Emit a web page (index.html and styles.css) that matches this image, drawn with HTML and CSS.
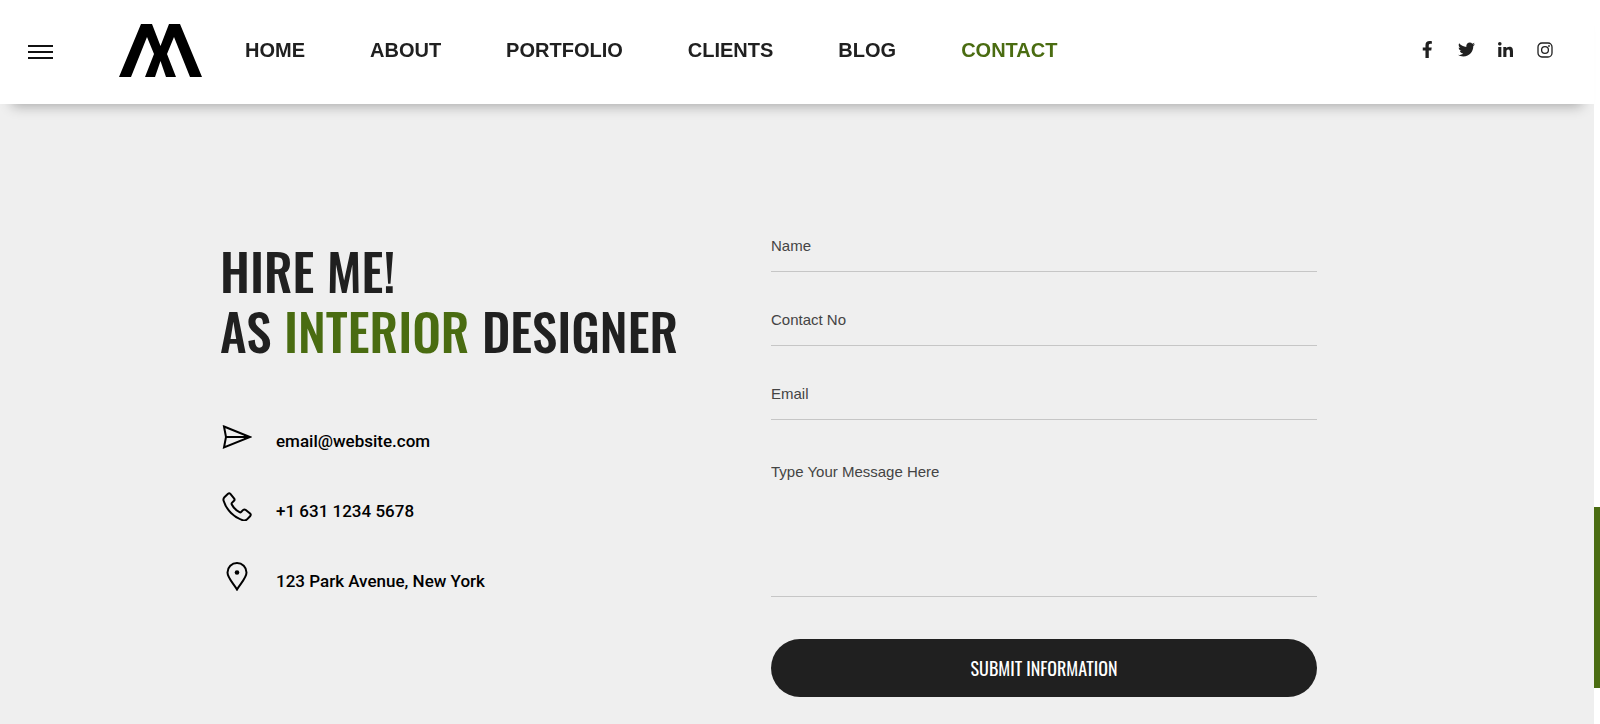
FILE: index.html
```
<!DOCTYPE html>
<html lang="en">
<head>
    <meta charset="utf-8">
    <meta name="viewport" content="width=device-width, initial-scale=1">
    <title>Contact - Interior Designer</title>
    <link rel="stylesheet" href="styles.css">
</head>
<body>
    <header class="header">
        <button class="menu-btn" type="button" aria-label="Open menu">
            <span></span>
            <span></span>
            <span></span>
        </button>
        <a class="logo" href="#" aria-label="Home page">
            <svg viewBox="0 0 83 53" width="83" height="53">
                <path d="M0 53 22 0H33L41.500 22 50 0H61L83 53H71L55 13 48 30 57 53H47L41.500 37 36 53H26L35 30 28 13 12 53Z"/>
            </svg>
        </a>
        <nav class="nav">
            <a href="#">HOME</a>
            <a href="#">ABOUT</a>
            <a href="#">PORTFOLIO</a>
            <a href="#">CLIENTS</a>
            <a href="#">BLOG</a>
            <a class="active" href="#">CONTACT</a>
        </nav>
        <div class="social">
            <a href="#" aria-label="Facebook">
                <svg viewBox="0 0 320 512" height="17"><path d="M279.140 288l14.220-92.660h-88.910v-60.130c0-25.350 12.420-50.060 52.240-50.060h40.420V6.260S260.430 0 225.360 0c-73.220 0-121.080 44.380-121.080 124.720v70.620H22.890V288h81.390v224h100.170V288z"/></svg>
            </a>
            <a href="#" aria-label="Twitter">
                <svg viewBox="0 0 512 512" height="17"><path d="M459.370 151.716c.325 4.548.325 9.097.325 13.645 0 138.720-105.583 298.558-298.558 298.558-59.452 0-114.680-17.219-161.137-47.106 8.447.974 16.568 1.299 25.340 1.299 49.055 0 94.213-16.568 130.274-44.832-46.132-.975-84.792-31.188-98.112-72.772 6.498.974 12.995 1.624 19.818 1.624 9.421 0 18.843-1.300 27.614-3.573-48.081-9.747-84.143-51.980-84.143-102.985v-1.299c13.969 7.797 30.214 12.670 47.431 13.319-28.264-18.843-46.781-51.005-46.781-87.391 0-19.492 5.197-37.360 14.294-52.954 51.655 63.675 129.300 105.258 216.365 109.807-1.624-7.797-2.599-15.918-2.599-24.040 0-57.828 46.782-104.934 104.934-104.934 30.213 0 57.502 12.670 76.670 33.137 23.715-4.548 46.456-13.320 66.599-25.340-7.798 24.366-24.366 44.833-46.132 57.827 21.117-2.273 41.584-8.122 60.426-16.243-14.292 20.791-32.161 39.308-52.628 54.253z"/></svg>
            </a>
            <a href="#" aria-label="LinkedIn">
                <svg viewBox="0 0 448 448" height="15"><path d="M100.280 448H7.400V148.900h92.880zM53.790 108.100C24.090 108.100 0 83.500 0 53.800a53.790 53.790 0 0 1 107.580 0c0 29.700-24.100 54.300-53.790 54.300zM447.900 448h-92.680V302.400c0-34.700-.7-79.200-48.290-79.200-48.290 0-55.690 37.700-55.690 76.700V448h-92.780V148.900h89.080v40.800h1.300c12.400-23.500 42.690-48.300 87.880-48.300 94 0 111.280 61.900 111.280 142.300V448z"/></svg>
            </a>
            <a href="#" aria-label="Instagram">
                <svg class="line" viewBox="0 0 16 16" height="16"><rect x="1" y="1" width="14" height="14" rx="4"/><circle cx="8" cy="8" r="3.400"/><circle cx="12" cy="4" r=".3"/></svg>
            </a>
        </div>
    </header>

    <main class="contact">
        <section class="info">
            <h1>HIRE ME!<br>AS <span>INTERIOR</span> DESIGNER</h1>
            <ul>
                <li>
                    <svg viewBox="0 0 30 30" width="30" height="30"><path d="M2 5.500 28 16 2 26.500 4 16ZM4 16H28"/><path class="dot" d="M22 13.500 29 16 22 18.500Z"/></svg>
                    <a href="mailto:email@website.com">email@website.com</a>
                </li>
                <li>
                    <svg viewBox="0 -1 30 30" width="30" height="30"><path d="M6 1.700Q7.300.7 8.400 1.900L12.200 6.600Q13 7.800 12 8.800L9.900 10.900Q9.300 11.600 9.800 12.500C11.500 15.800 14.200 18.500 17.500 20.200Q18.400 20.700 19.100 20L21.200 17.900Q22.300 17 23.500 17.800L28.100 21.600Q29.300 22.700 28.300 24L24.800 27.600Q23.300 29 21.300 28.400C12 25.500 4.500 18 1.600 8.700Q1 6.700 2.400 5.200Z"/></svg>
                    <a href="tel:+163112345678">+1 631 1234 5678</a>
                </li>
                <li>
                    <svg viewBox="0 -1 30 30" width="30" height="30"><path d="M15 27.500C12 22 5.500 16 5.500 10.500A9.500 9.500 0 0 1 24.500 10.500C24.500 16 18 22 15 27.500Z"/><circle class="dot" cx="15" cy="10.500" r="2.300"/></svg>
                    <span>123 Park Avenue, New York</span>
                </li>
            </ul>
        </section>

        <form class="contact-form">
            <input type="text" name="name" placeholder="Name" aria-label="Name">
            <input type="tel" name="phone" placeholder="Contact No" aria-label="Contact No">
            <input type="email" name="email" placeholder="Email" aria-label="Email">
            <textarea name="message" placeholder="Type Your Message Here" aria-label="Type Your Message Here"></textarea>
            <button type="submit">SUBMIT INFORMATION</button>
        </form>
    </main>

    <div class="scroll-track"><div class="scroll-thumb"></div></div>
</body>
</html>
```
FILE: styles.css
```
* { box-sizing: border-box; }
body { margin: 0; padding-right: 6px; min-height: 100vh; display: flex; flex-direction: column; background: white; color: #202020; font-family: "Liberation Sans", Arial, sans-serif; }
a { color: inherit; text-decoration: none; }

/* header */
.header { display: flex; align-items: center; height: 104px; padding: 0 38px 3px 28px; background: white; box-shadow: 0 14px 12px -12px rgba(0,0,0,0.3); z-index: 1; }
.menu-btn { display: flex; flex-direction: column; gap: 4px; width: 25px; padding: 3px 0 0; border: none; background: none; cursor: pointer; }
.menu-btn span { height: 2px; background: #111; }
.logo { margin: 0 43px 0 66px; line-height: 0; }
.nav { display: flex; gap: 65px; font-size: 20px; font-weight: bold; }
.nav .active { color: #4a6c11; }
.social { display: flex; gap: 16px; margin-left: auto; padding-bottom: 2px; }
.social a { display: flex; align-items: center; justify-content: center; width: 23px; height: 20px; }
.social svg { fill: #202020; }
.social .line { fill: none; stroke: #202020; stroke-width: 1.3; }

/* contact section */
.contact { flex: 1; display: grid; grid-template-columns: 551fr 546fr; padding: 117px 277px 27px 220px; background: #efefef; }
.info h1 { margin: 19px 0 61px; font-family: Oswald, "Liberation Sans Narrow", sans-serif; font-size: 51px; font-weight: 500; line-height: 60px; }
.info h1 span { color: #4a6c11; }
.info ul { margin: 0; padding: 0; list-style: none; }
.info li { display: flex; gap: 24px; height: 70px; padding-left: 2px; color: #000; font-family: Roboto, sans-serif; font-size: 17px; font-weight: 500; line-height: 40px; }
.info svg { fill: none; stroke: #000; stroke-width: 2; }
.info .dot { fill: #000; stroke: none; }

.contact-form { display: flex; flex-direction: column; gap: 23px; }
.contact-form input, .contact-form textarea { width: 100%; height: 51px; padding: 0 0 2px; border: none; border-bottom: 1px solid #c6c6c6; border-radius: 0; background: none; color: #202020; font-family: inherit; font-size: 15px; outline: none; }
.contact-form textarea { height: 154px; padding-top: 20px; resize: none; }
.contact-form ::placeholder { color: #444; opacity: 1; }
.contact-form button { height: 58px; margin-top: 19px; border: none; border-radius: 29px; background: #202020; color: white; font-family: Oswald, "Liberation Sans Narrow", sans-serif; font-size: 18px; cursor: pointer; }

/* page scrollbar */
.scroll-track { position: fixed; top: 0; right: 0; bottom: 0; width: 6px; padding-top: 507px; background: white; }
.scroll-thumb { height: 181px; background: #4a6c11; }

@media (max-width: 1100px) {
    .header { height: auto; padding: 20px; flex-wrap: wrap; }
    .nav { flex-wrap: wrap; gap: 20px; }
    .contact { grid-template-columns: 1fr; padding: 40px; }
}
```
